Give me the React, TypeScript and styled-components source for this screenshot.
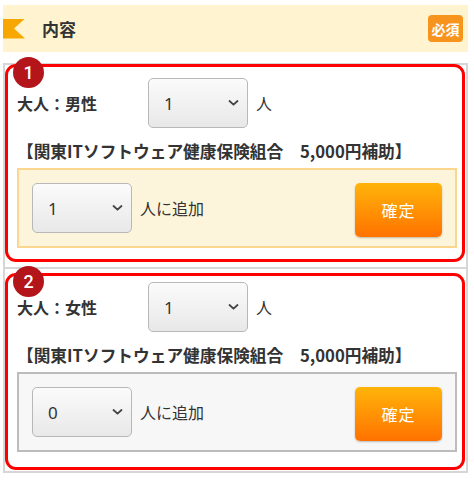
import React from "react";
import styled, { createGlobalStyle } from "styled-components";

const GlobalStyle = createGlobalStyle`
  * { box-sizing: border-box; }
  body {
    margin: 0;
    background: #fff;
    color: #333;
    font-family: "Noto Sans CJK JP", "Noto Sans", sans-serif;
  }
`;

type Entry = {
  no: number;
  label: string;
  count: string;
  add: string;
  active: boolean;
  frameTop: number;
  frameBottom: number;
};

const entries: Entry[] = [
  { no: 1, label: "大人：男性", count: "1", add: "1", active: true, frameTop: -1, frameBottom: 5 },
  { no: 2, label: "大人：女性", count: "1", add: "0", active: false, frameTop: 4, frameBottom: 1 },
];

const Chevron = () => (
  <svg width="11" height="7" viewBox="0 0 11 7">
    <path d="M1.5 1.5 L5.5 5.2 L9.5 1.5" fill="none" stroke="#444" strokeWidth="1.8" strokeLinecap="round" strokeLinejoin="round" />
  </svg>
);

const Select = ({ value }: { value: string }) => (
  <SelectWrap>
    <NativeSelect defaultValue={value}>
      {["0", "1", "2", "3", "4", "5"].map((v) => (
        <option key={v} value={v}>
          {v}
        </option>
      ))}
    </NativeSelect>
    <ChevronSlot>
      <Chevron />
    </ChevronSlot>
  </SelectWrap>
);

const App = () => {
  return (
    <Page>
      <GlobalStyle />
      <Header>
        <Flag />
        <HeaderTitle>内容</HeaderTitle>
        <Required>必須</Required>
      </Header>
      <List>
        {entries.map((e) => (
          <Item key={e.no}>
            <Row>
              <Label>{e.label}</Label>
              <Select value={e.count} />
              <Unit>人</Unit>
            </Row>
            <Subsidy>【関東ITソフトウェア健康保険組合　5,000円補助】</Subsidy>
            <AddBox $active={e.active}>
              <Select value={e.add} />
              <Unit>人に追加</Unit>
              <ConfirmButton type="button">確定</ConfirmButton>
            </AddBox>
            <Frame $top={e.frameTop} $bottom={e.frameBottom}>
              <Number>{e.no}</Number>
            </Frame>
          </Item>
        ))}
      </List>
    </Page>
  );
};

const Page = styled.div`
  width: 474px;
  padding: 5px 6px 0 3px;
`;

const Header = styled.div`
  display: flex;
  align-items: center;
  height: 47px;
  padding-right: 5px;
  background: #fff4cf;
`;

const Flag = styled.div`
  width: 22px;
  height: 20px;
  background: #f7a700;
  clip-path: polygon(0 0, 100% 0, 50% 50%, 100% 100%, 0 100%);
`;

const HeaderTitle = styled.h2`
  margin: 0 0 0 17px;
  font-size: 17px;
  font-weight: bold;
  color: #333;
`;

const Required = styled.span`
  margin-left: auto;
  width: 35px;
  height: 27px;
  display: flex;
  align-items: center;
  justify-content: center;
  border-radius: 4px;
  background: #f7941d;
  color: #fff;
  font-size: 14px;
  font-weight: bold;
`;

const List = styled.div`
  margin-top: 11px;
  border: 2px solid #d6d6d6;
`;

const Item = styled.div`
  position: relative;
  padding: 13px 9px 19px 12px;

  & + & {
    border-top: 2px solid #d6d6d6;
  }
`;

const Row = styled.div`
  display: flex;
  align-items: center;
`;

const Label = styled.div`
  width: 131px;
  font-size: 16px;
  font-weight: bold;
  color: #333;
`;

const SelectWrap = styled.div`
  position: relative;
  width: 100px;
  height: 50px;
  flex-shrink: 0;
`;

const NativeSelect = styled.select`
  appearance: none;
  width: 100%;
  height: 100%;
  padding: 0 0 0 15px;
  border: 1px solid #b8b8b8;
  border-radius: 5px;
  background: linear-gradient(#fbfbfb, #e8e8e8);
  color: #333;
  font-family: "Noto Sans", "Noto Sans CJK JP", sans-serif;
  font-size: 17px;
  outline: none;
`;

const ChevronSlot = styled.span`
  position: absolute;
  right: 9px;
  top: 50%;
  transform: translateY(-50%);
  display: flex;
  pointer-events: none;
`;

const Unit = styled.span`
  margin-left: 8px;
  font-size: 16px;
  color: #333;
`;

const Subsidy = styled.p`
  margin: 12px 0 6px;
  line-height: 22px;
  font-size: 16.7px;
  font-weight: bold;
  color: #333;
  white-space: nowrap;
`;

const AddBox = styled.div<{ $active: boolean }>`
  display: flex;
  align-items: center;
  height: 80px;
  padding: 0 13px;
  border: 2px solid ${(p) => (p.$active ? "#fcd68c" : "#bcbcbc")};
  background: ${(p) => (p.$active ? "#fdf5db" : "#f7f7f7")};
`;

const ConfirmButton = styled.button`
  margin: 4px 0 0 auto;
  width: 87px;
  height: 54px;
  border: none;
  border-radius: 5px;
  background: linear-gradient(#ffb40a, #ff7200);
  box-shadow: 0 1px 2px rgba(0, 0, 0, 0.25);
  color: #fff;
  font-family: "Noto Sans CJK JP", sans-serif;
  font-size: 16px;
  letter-spacing: 1px;
`;

const Frame = styled.div<{ $top: number; $bottom: number }>`
  position: absolute;
  top: ${(p) => p.$top}px;
  bottom: ${(p) => p.$bottom}px;
  left: 0;
  right: 1px;
  border: 3px solid #ff0000;
  border-radius: 11px;
  pointer-events: none;
`;

const Number = styled.span`
  position: absolute;
  top: -10px;
  left: 5px;
  width: 31px;
  height: 31px;
  display: flex;
  align-items: center;
  justify-content: center;
  border-radius: 50%;
  background: #b3151b;
  color: #fff;
  font-family: Roboto, "Noto Sans", sans-serif;
  font-size: 18px;
  font-weight: 500;
`;

export default App;
